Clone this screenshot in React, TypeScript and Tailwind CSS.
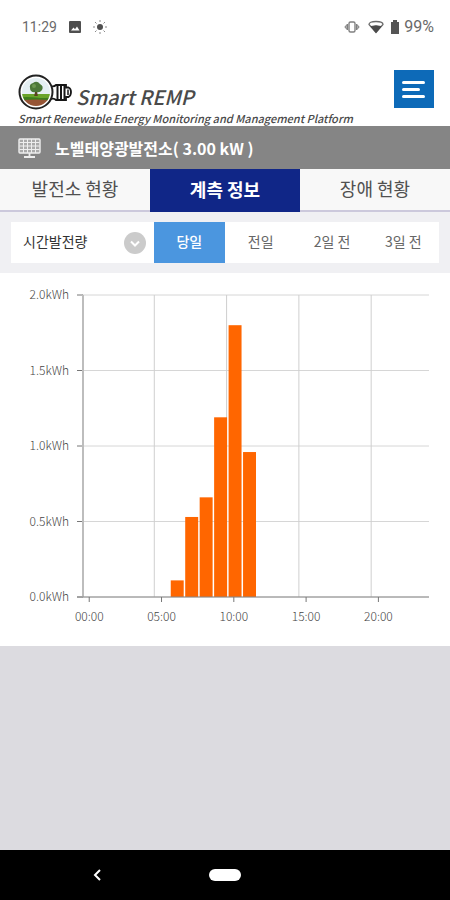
import { useState } from 'react'
import clsx from 'clsx'

const tabs = ['발전소 현황', '계측 정보', '장애 현황']
const days = ['당일', '전일', '2일 전', '3일 전']

// Hourly generation in kWh
const hourly = [
  { hour: 6, value: 0.11 },
  { hour: 7, value: 0.53 },
  { hour: 8, value: 0.66 },
  { hour: 9, value: 1.19 },
  { hour: 10, value: 1.8 },
  { hour: 11, value: 0.96 },
]

const LEFT = 82
const RIGHT = 429
const TOP = 22
const BOTTOM = 324
const STEP = (RIGHT - LEFT) / 24

function StatusBar() {
  return (
    <div className="flex h-[54px] items-center justify-between pr-4 pl-[22px] font-[Roboto,sans-serif] text-[#6a6a6a]">
      <div className="flex items-center">
        <span className="text-sm">11:29</span>
        <svg className="ml-3 size-3" viewBox="0 0 12 12" aria-hidden="true">
          <rect width="12" height="12" rx="1" fill="#4f4f4f" />
          <path d="M2 9.5 4.5 6.5 6 8.2 8 5.5 10.5 9.5Z" fill="#fff" />
        </svg>
        <svg className="ml-3 size-3.5" viewBox="0 0 14 14" stroke="#8a8a8a" aria-hidden="true">
          <path d="M7 0v2M7 12v2M0 7h2M12 7h2M2 2l1.5 1.5M10.5 10.5 12 12M12 2l-1.5 1.5M3.5 10.5 2 12" />
          <circle cx="7" cy="7" r="3" fill="#505050" stroke="none" />
        </svg>
      </div>
      <div className="flex items-center">
        <svg className="h-3.5 w-4" viewBox="0 0 16 14" fill="none" stroke="#808080" aria-hidden="true">
          <rect x="5" y="2" width="6" height="10" rx="1.5" strokeWidth="1.4" />
          <path d="M3.5 4 .8 7l2.7 3ZM12.5 4l2.7 3-2.7 3Z" fill="#aaa" />
        </svg>
        <svg className="ml-2 h-3.5 w-4" viewBox="0 0 16 14" aria-hidden="true">
          <path d="M1 4.5Q1 1.500 8 1.500T15 4.500L8 12.500Z" fill="#fff" stroke="#6a6a6a" strokeWidth="1.3" />
          <path d="M3 6.500Q8 5 13 6.500L8 12.500Z" fill="#4a4a4a" stroke="#4a4a4a" />
        </svg>
        <svg className="ml-1.5 h-3.5 w-2.5" viewBox="0 0 10 14" fill="#555" aria-hidden="true">
          <path d="M3 0h4v2h2v12H1V2h2Z" />
        </svg>
        <span className="ml-1 text-base">99%</span>
      </div>
    </div>
  )
}

function Logo() {
  return (
    <svg className="h-9 w-[54px] shrink-0" viewBox="0 0 54 36" aria-hidden="true">
      <defs>
        <clipPath id="bulb">
          <circle cx="18" cy="18" r="14" />
        </clipPath>
      </defs>
      <path
        d="M33 12q3 1 5-1h10v2.5h2.5q2.5 1 2.5 4.5t-2.5 5H48V26H38q-2-2-5-1Z"
        fill="#fff"
        stroke="#161616"
        strokeWidth="1.8"
      />
      <path d="M39.5 12v13M43 12v13M46.5 12v13" stroke="#161616" strokeWidth="2" />
      <path d="M50 15.5v5.5" stroke="#161616" strokeWidth="1.5" />
      <circle cx="18" cy="18" r="16.5" fill="#fff" stroke="#222" strokeWidth="2" />
      <g clipPath="url(#bulb)">
        <rect width="36" height="22" fill="#e4eff3" />
        <rect y="20" width="36" height="6" fill="#69a42a" />
        <path d="M0 23.5Q9 22.5 18 23.5T36 23.5V27H0Z" fill="#3c7d1d" />
        <path d="M0 26.5Q18 24.5 36 26.5V36H0Z" fill="#965536" />
        <path d="M17.2 17h1.8l.8 5h-3.6Z" fill="#5a4020" />
        <path d="M12 14Q11 10 15 9Q19 6 22 10Q26 12 24 16Q22 19 18 18Q12 19 12 14Z" fill="#4b7838" />
        <circle cx="16" cy="12" r="2" fill="#6b9850" />
      </g>
    </svg>
  )
}

function PanelIcon() {
  return (
    <svg className="h-5 w-[23px]" viewBox="0 0 23 20" fill="none" stroke="#eee" aria-hidden="true">
      <rect x="1" y="1" width="21" height="14" rx="1" fill="#aaa" strokeWidth="1.4" />
      <path d="M1.5 4.5h20M1.5 8h20M1.5 11.5h20M5.5 1v14M9.5 1v14M13.5 1v14M17.5 1v14" />
      <path d="M11.5 15v4M6 19h11" strokeWidth="1.8" />
    </svg>
  )
}

function GenerationChart() {
  const y = (value: number) => BOTTOM - (value / 2) * (BOTTOM - TOP)

  return (
    <svg className="block w-full bg-white" viewBox="0 0 450 373" role="img" aria-label="시간발전량">
      {[2, 1.5, 1, 0.5, 0].map((value) => (
        <g key={value}>
          <path d={`M${LEFT} ${y(value)}H${RIGHT}`} stroke="#d6d6d6" />
          <path d={`M${LEFT - 5} ${y(value)}h6`} stroke="#777" />
          <text x="69" y={y(value) + 4} textAnchor="end" fontSize="12" fontWeight="300" fill="#444">
            {value.toFixed(1)}kWh
          </text>
        </g>
      ))}
      {[5, 10, 15, 20].map((hour) => (
        <path key={hour} d={`M${LEFT + hour * STEP} ${TOP}V${BOTTOM}`} stroke="#cfcfcf" />
      ))}
      {hourly.map(({ hour, value }) => (
        <rect
          key={hour}
          x={LEFT + hour * STEP + 2}
          y={y(value)}
          width={STEP - 1.5}
          height={BOTTOM - y(value)}
          fill="#ff6600"
        />
      ))}
      <path d={`M${LEFT + 1} ${TOP}V${BOTTOM}`} stroke="#bdbdbd" strokeWidth="2" />
      <path d={`M${LEFT - 5} ${BOTTOM}H${RIGHT}`} stroke="#888" />
      {[0, 5, 10, 15, 20].map((hour) => (
        <g key={hour}>
          <path d={`M${LEFT + (hour + 0.5) * STEP} ${BOTTOM}v5`} stroke="#777" />
          <text
            x={LEFT + (hour + 0.5) * STEP}
            y="348"
            textAnchor="middle"
            fontSize="12"
            fontWeight="300"
            fill="#444"
          >
            {String(hour).padStart(2, '0')}:00
          </text>
        </g>
      ))}
    </svg>
  )
}

export default function App() {
  const [tab, setTab] = useState(1)
  const [day, setDay] = useState(0)

  return (
    <div className="flex min-h-screen flex-col bg-[#dcdbe0] font-['Noto_Sans_CJK_KR',sans-serif]">
      <div className="bg-white">
        <StatusBar />
        <header className="flex h-[72px] items-start justify-between pr-4 pl-[18px]">
          <div className="pt-5 text-[#4a4a4a] italic">
            <div className="flex h-9 items-end gap-1">
              <Logo />
              <h1 className="text-xl leading-[26px] font-medium">Smart REMP</h1>
            </div>
            <p className="text-[11px] leading-4 font-medium whitespace-nowrap">
              Smart Renewable Energy Monitoring and Management Platform
            </p>
          </div>
          <button
            type="button"
            aria-label="메뉴"
            className="mt-4 flex h-[38px] w-10 flex-col justify-center gap-1 bg-[#0d6ab8] pl-2"
          >
            <span className="h-[3px] w-[23px] rounded-full bg-white" />
            <span className="h-[3px] w-[18px] rounded-full bg-white" />
            <span className="h-[3px] w-[23px] rounded-full bg-white" />
          </button>
        </header>
      </div>

      <div className="flex h-[43px] items-center gap-3.5 bg-[#858585] pl-[18px]">
        <PanelIcon />
        <h2 className="text-base leading-6 font-bold text-white">노벨태양광발전소( 3.00 kW )</h2>
      </div>

      <nav className="grid h-[43px] grid-cols-3 border-b-2 border-[#ccc9dc] bg-[#f8f8f8]">
        {tabs.map((label, i) => (
          <button
            key={label}
            type="button"
            onClick={() => setTab(i)}
            className={clsx(
              'pb-1 text-lg leading-6',
              tab === i ? '-mb-0.5 bg-[#102687] font-bold text-white' : 'text-[#505050]'
            )}
          >
            {label}
          </button>
        ))}
      </nav>

      <div className="flex bg-[#f0f0f3] px-[11px] py-2.5">
        <div className="relative w-1/3 bg-white">
          <select
            aria-label="계측 항목"
            className="h-[41px] w-full appearance-none bg-white pb-1 pl-3 text-sm text-[#333]"
          >
            <option>시간발전량</option>
          </select>
          <svg
            className="pointer-events-none absolute top-2.5 right-2 size-[22px]"
            viewBox="0 0 22 22"
            aria-hidden="true"
          >
            <circle cx="11" cy="11" r="11" fill="#cbcbcb" />
            <path d="m7 9.5 4 4 4-4" fill="none" stroke="#fff" strokeWidth="2" />
          </svg>
        </div>
        <div className="grid w-2/3 grid-cols-4 bg-white">
          {days.map((label, i) => (
            <button
              key={label}
              type="button"
              onClick={() => setDay(i)}
              className={clsx('pb-1 text-sm', day === i ? 'bg-[#4b96df] font-medium text-white' : 'text-[#666]')}
            >
              {label}
            </button>
          ))}
        </div>
      </div>

      <GenerationChart />

      <div className="mt-auto grid h-[50px] grid-cols-3 items-center bg-black">
        <button type="button" aria-label="뒤로" className="justify-self-center pl-11">
          <svg className="h-3 w-2" viewBox="0 0 8 12" fill="none" stroke="#fff" strokeWidth="2">
            <path d="M7 1 2 6l5 5" />
          </svg>
        </button>
        <button type="button" aria-label="홈" className="h-3 w-8 justify-self-center rounded-full bg-white" />
      </div>
    </div>
  )
}
